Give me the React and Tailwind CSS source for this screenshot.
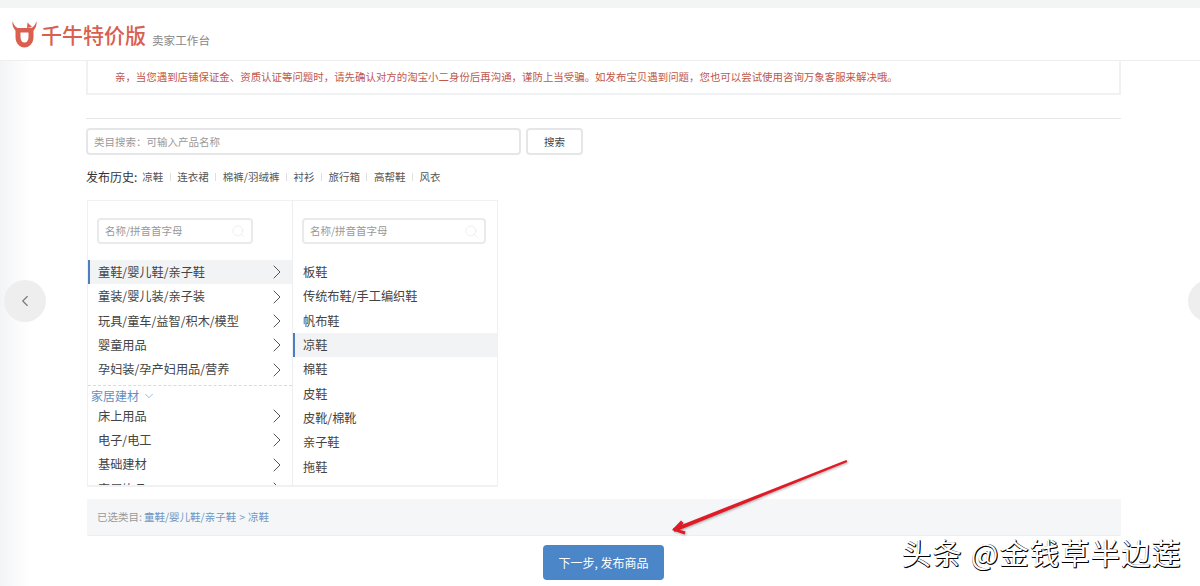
import React from 'react';
import { ChevronRight, ChevronLeft, ChevronDown, Search } from 'lucide-react';

const leftTop = ['童鞋/婴儿鞋/亲子鞋', '童装/婴儿装/亲子装', '玩具/童车/益智/积木/模型', '婴童用品', '孕妇装/孕产妇用品/营养'];
const leftBottom = ['床上用品', '电子/电工', '基础建材', '家居饰品'];
const rightItems = ['板鞋', '传统布鞋/手工编织鞋', '帆布鞋', '凉鞋', '棉鞋', '皮鞋', '皮靴/棉靴', '亲子鞋', '拖鞋', '舞蹈鞋'];
const history = ['凉鞋', '连衣裙', '棉裤/羽绒裤', '衬衫', '旅行箱', '高帮鞋', '风衣'];

const Logo = () => (
  <svg width="25" height="28" viewBox="0 0 25 28" fill="#d9604f">
    <path d="M0.6 1 C0 5 1 8 4 11 L8 9 C4.5 8 2 6 0.6 1 Z" />
    <path d="M24.4 1 C25 5 24 8 21 11 L17 9 C20.5 8 23 6 24.4 1 Z" />
    <path d="M15.5 2.5 L20 7 L15 8 Z" />
    <path fillRule="evenodd" d="M3.5 8 H21.5 V17 C21.5 23 17.5 27.5 12.5 27.5 C7.5 27.5 3.5 23 3.5 17 Z M8.5 12.5 V17 C8.5 20.5 10 22.5 12.5 22.5 C15 22.5 16.5 20.5 16.5 17 V12.5 Z" />
  </svg>
);

const FilterInput = ({ width }) => (
  <div className={`flex h-[26px] items-center justify-between rounded-sm border-2 border-[#e8eaec] pl-[6px] pr-[5px] text-[10.5px] text-[#999] ${width}`}>
    <span>名称/拼音首字母</span>
    <Search size={15} strokeWidth={1} className="text-[#e4e6e8]" />
  </div>
);

const Row = ({ label, active, arrow }) => (
  <div className={`flex h-[24.35px] shrink-0 items-center justify-between border-l-2 pl-[8px] text-[12.2px] text-[#444] ${arrow ? 'pr-[3px]' : ''} ${active ? 'border-[#4a80c0] bg-[#f2f3f5]' : 'border-transparent'}`}>
    <span>{label}</span>
    {arrow && <ChevronRight size={24} strokeWidth={1} className="text-[#555]" />}
  </div>
);

const App = () => (
  <div className="relative h-[586px] w-[1200px] overflow-hidden bg-white text-[#444] font-['Noto_Sans_CJK_SC','Liberation_Sans',sans-serif]">
    <div className="h-2 bg-[#f3f4f4]" />
    <header className="flex h-[53px] items-start border-b border-[#eeeeee] pl-[12px] pt-[12px]">
      <Logo />
      <span className="ml-[4px] text-[21px] font-medium leading-[28px] text-[#d9604f]">千牛特价版</span>
      <span className="ml-[6px] mt-[11px] text-[11.6px] leading-[18px] text-[#888]">卖家工作台</span>
    </header>

    <main className="h-[525px] bg-[linear-gradient(to_right,#f3f4f6,#ffffff_30px)] pl-[86px]">
      <div className="w-[1035px]">
        <div className="flex h-[34px] items-center border-2 border-t-0 border-[#f0f1f2] pl-[27px] text-[10.45px] text-[#c0584c]">
          亲，当您遇到店铺保证金、资质认证等问题时，请先确认对方的淘宝小二身份后再沟通，谨防上当受骗。如发布宝贝遇到问题，您也可以尝试使用咨询万象客服来解决哦。
        </div>
        <div className="mt-[23px] h-px bg-[#e4e6e8]" />

        <div className="mt-[9px] flex gap-[5px]">
          <div className="flex h-[27px] w-[435px] items-center rounded-sm border-2 border-[#e4e6e8] pl-[6px] text-[10.5px] text-[#999]">
            类目搜索：可输入产品名称
          </div>
          <button className="h-[27px] w-[57px] rounded-sm border-2 border-[#e4e6e8] text-[10.5px] text-[#444]">搜索</button>
        </div>

        <div className="mt-[12px] flex h-5 items-center text-[12px] text-[#333]">
          <span className="mr-[5px]">发布历史:</span>
          {history.map((item, i) => (
            <React.Fragment key={item}>
              {i > 0 && <span className="mx-[6.5px] h-[8px] w-px bg-[#e0e0e0]" />}
              <span className="text-[10.5px] text-[#555]">{item}</span>
            </React.Fragment>
          ))}
        </div>

        <div className="ml-px mt-[13px] flex h-[287px] w-[411px] overflow-hidden border border-b-2 border-[#f0f1f3]">
          <div className="flex w-[205px] shrink-0 flex-col border-r border-[#eceef0] pt-[17px]">
            <div className="pl-[9px]"><FilterInput width="w-[156px]" /></div>
            <div className="mt-[16px] flex flex-col">
              {leftTop.map((item, i) => <Row key={item} label={item} arrow active={i === 0} />)}
            </div>
            <div className="mt-[3px] flex h-[19px] shrink-0 items-center gap-[3px] border-t border-dashed border-[#d9dadb] pl-[3px] pt-[2px] text-[12px] text-[#5f8fc4]">
              家居建材 <ChevronDown size={14} strokeWidth={1} />
            </div>
            <div className="flex flex-col">
              {leftBottom.map((item) => <Row key={item} label={item} arrow />)}
            </div>
          </div>
          <div className="flex min-w-0 flex-1 flex-col pt-[17px]">
            <div className="pl-[9px]"><FilterInput width="w-[184px]" /></div>
            <div className="mt-[16px] flex flex-col">
              {rightItems.map((item) => <Row key={item} label={item} active={item === '凉鞋'} />)}
            </div>
          </div>
        </div>

        <div className="ml-px mt-[12px] flex h-[37px] items-center border-b border-[#eceef0] bg-[#f4f6f8] pl-[10px] text-[10.5px] text-[#999]">
          已选类目:
          <span className="ml-[2px] text-[#6f97c4]">童鞋/婴儿鞋/亲子鞋<span className="mx-[3px]">&gt;</span>凉鞋</span>
        </div>

        <button className="mx-auto mt-[9px] block h-[35px] w-[121px] rounded-sm bg-[#4a86c8] text-[12px] text-white">
          下一步, 发布商品
        </button>
      </div>
    </main>

    {/* carousel arrows sit over the page */}
    <div className="absolute left-[4px] top-[280px] flex h-[42px] w-[42px] items-center justify-center rounded-full bg-[#eeeeee]">
      <ChevronLeft size={18} strokeWidth={1.5} className="text-[#777]" />
    </div>
    <div className="absolute left-[1188px] top-[280px] h-[42px] w-[42px] rounded-full bg-[#eeeeee]" />

    {/* annotation arrow, tapered towards the tail */}
    <svg className="absolute left-[660px] top-[450px] drop-shadow-[1px_1px_1px_rgba(0,0,0,0.3)]" width="200" height="95" viewBox="0 0 200 95" fill="#e01a26">
      <path d="M186.3 10 L187.4 12 L14.5 82 L13 78.2 Z" />
      <path d="M12 80 L21 70.5 L23.5 73 L18.5 79.5 L25.5 81.5 L24.5 84.5 Z" />
    </svg>

    {/* watermark */}
    <div className="absolute left-[902px] top-[533px] whitespace-nowrap text-[29px] leading-[38px] tracking-[1.4px] text-white [text-shadow:1px_1px_0_#000,0_1px_0_#000,1px_0_0_#333]">
      头条 @金钱草半边莲
    </div>
  </div>
);

export default App;
